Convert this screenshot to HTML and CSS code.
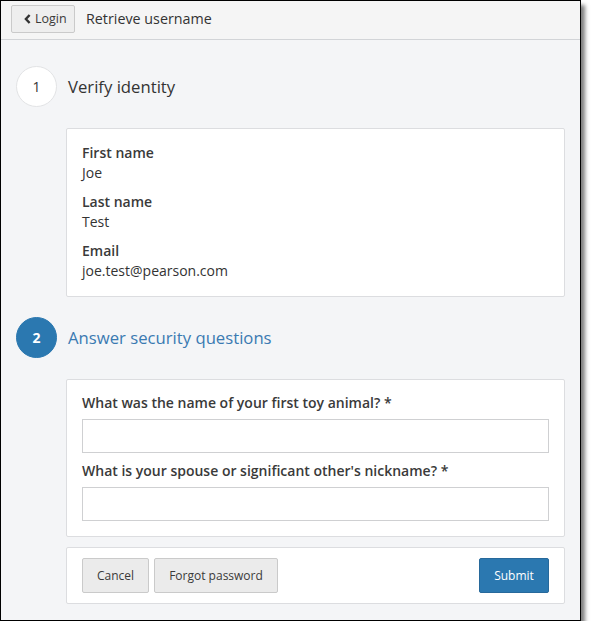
FILE: index.html
```html
<!DOCTYPE html>
<html>
<head>
<meta charset="utf-8">
<link rel="stylesheet" href="styles.css">
</head>
<body>
<div class="frame">
  <header class="topbar">
    <button class="btn btn-back" type="button">
      <svg class="chev" width="7" height="10" viewBox="0 0 7 10"><path d="M5.6 1 L1.9 5 L5.6 9" fill="none" stroke="#333" stroke-width="2.4" stroke-linejoin="miter"/></svg>
      <span>Login</span>
    </button>
    <h1 class="page-title">Retrieve username</h1>
  </header>
  <main class="content">
    <div class="step">
      <div class="step-num">1</div>
      <h2 class="step-title">Verify identity</h2>
    </div>
    <section class="card info">
      <div class="field">
        <div class="label">First name</div>
        <div class="value">Joe</div>
      </div>
      <div class="field">
        <div class="label">Last name</div>
        <div class="value">Test</div>
      </div>
      <div class="field">
        <div class="label">Email</div>
        <div class="value">joe.test@pearson.com</div>
      </div>
    </section>
    <div class="step step-active">
      <div class="step-num">2</div>
      <h2 class="step-title">Answer security questions</h2>
    </div>
    <section class="card questions">
      <label class="q-label">What was the name of your first toy animal? *</label>
      <input class="q-input" type="text">
      <label class="q-label">What is your spouse or significant other's nickname? *</label>
      <input class="q-input" type="text">
    </section>
    <section class="card actions">
      <button class="btn" type="button">Cancel</button>
      <button class="btn" type="button">Forgot password</button>
      <button class="btn btn-primary" type="button">Submit</button>
    </section>
  </main>
</div>
</body>
</html>
```
FILE: styles.css
```css
* { box-sizing: border-box; }
html, body { margin: 0; padding: 0; background: #fff; }
body {
  font-family: "Open Sans", "Liberation Sans", sans-serif;
  color: #333;
}
.frame {
  width: 581px;
  height: 621px;
  border: 1px solid #000;
  background: #f4f5f7;
  box-shadow: 4px 5px 4px rgba(0,0,0,0.5);
  display: flex;
  flex-direction: column;
}
.topbar {
  height: 39px;
  background: #f5f5f5;
  border-bottom: 1px solid #d2d4d7;
  display: flex;
  align-items: flex-start;
  padding: 4px 10px 0;
  gap: 11px;
}
.page-title {
  margin: 0;
  font-size: 14.3px;
  font-weight: 400;
  line-height: 20px;
  padding-top: 4px;
  color: #333;
}
.btn {
  font-family: "Open Sans", "Liberation Sans", sans-serif;
  font-size: 12px;
  color: #3a3a3a;
  background: #ebebeb;
  border: 1px solid #cacaca;
  border-radius: 2px;
  height: 35px;
  padding: 0;
  line-height: 20px;
  white-space: nowrap;
  display: inline-flex;
  align-items: center;
  justify-content: center;
}
.btn-back {
  height: 28px;
  width: 64px;
  padding: 0 6px 0 12px;
  gap: 4px;
  font-size: 12.5px;
  background: #eeeeee;
  justify-content: flex-start;
}
.chev { display: block; }
.content {
  flex: 1;
  padding: 26px 15px 0 15px;
}
.step {
  display: flex;
  align-items: center;
  gap: 11px;
}
.step-num {
  width: 41px;
  height: 41px;
  border-radius: 50%;
  background: #fff;
  border: 1px solid #e2e3e5;
  display: flex;
  align-items: center;
  justify-content: center;
  font-size: 14px;
  font-weight: 400;
  color: #333;
}
.step-title {
  margin: 0;
  font-size: 16.7px;
  font-weight: 400;
  color: #333;
  line-height: 24px;
}
.step-active .step-num {
  background: #2b78b0;
  border-color: #2b78b0;
  color: #fff;
  font-weight: 700;
}
.step-active .step-title { color: #3a7ab2; }
.card {
  margin-left: 50px;
  background: #fff;
  border: 1px solid #dcdde0;
  border-radius: 2px;
}
.info {
  margin-top: 21px;
  margin-bottom: 20px;
  padding: 14px 15px 15px;
  display: flex;
  flex-direction: column;
  gap: 9px;
}
.label {
  font-size: 14px;
  font-weight: 600;
  line-height: 20px;
  color: #3a3a3a;
}
.value {
  font-size: 14px;
  line-height: 20px;
  color: #333;
}
.questions {
  margin-top: 21px;
  padding: 13px 15px 15px;
  display: flex;
  flex-direction: column;
}
.q-label {
  font-size: 14px;
  font-weight: 600;
  line-height: 20px;
  color: #3a3a3a;
  margin-bottom: 6px;
}
.q-input {
  height: 34px;
  border: 1px solid #cfd0d2;
  border-radius: 0;
  background: #fff;
  margin: 0 0 8px;
}
.q-input:last-child { margin-bottom: 0; }
.actions {
  margin-top: 10px;
  padding: 10px 15px;
  display: flex;
  gap: 5px;
}
.actions .btn:nth-child(1) { width: 67px; }
.actions .btn:nth-child(2) { width: 124px; }
.btn-primary {
  margin-left: auto;
  width: 70px;
  background: #2b78b0;
  border-color: #27699b;
  color: #fff;
}
```
